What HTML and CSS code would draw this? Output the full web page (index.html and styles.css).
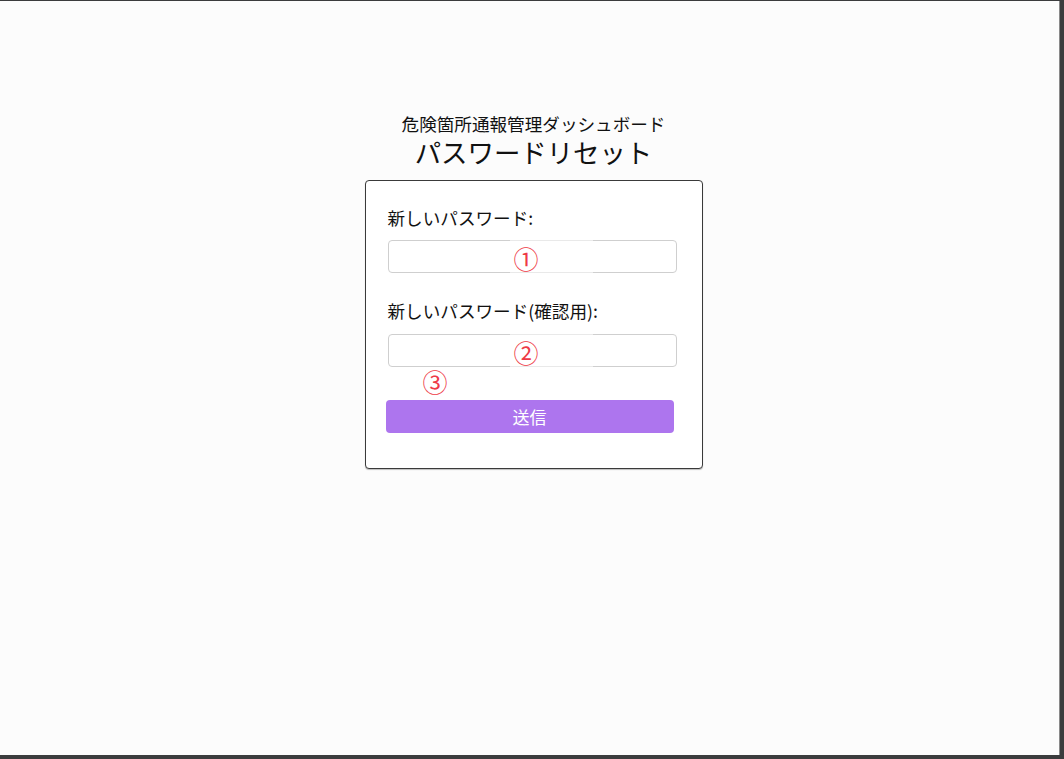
FILE: index.html
```html
<!DOCTYPE html>
<html lang="ja">
<head>
<meta charset="utf-8">
<title>パスワードリセット</title>
<link rel="stylesheet" href="styles.css">
</head>
<body>
<div class="screen">
  <main class="page">
    <div class="app-title">危険箇所通報管理ダッシュボード</div>
    <h1 class="heading">パスワードリセット</h1>
    <form class="card">
      <label class="label" for="pw1">新しいパスワード:</label>
      <div class="field">
        <input class="input" id="pw1" type="password">
        <span class="mark mark-box">①</span>
      </div>
      <label class="label label-2" for="pw2">新しいパスワード(確認用):</label>
      <div class="field">
        <input class="input" id="pw2" type="password">
        <span class="mark mark-box">②</span>
        <span class="mark mark-3">③</span>
      </div>
      <button class="submit" type="button">送信</button>
    </form>
  </main>
</div>
</body>
</html>
```

FILE: styles.css
```css
html {
  background: #3b3c3d;
}
body {
  margin: 0;
  font-family: "Noto Sans CJK JP", "Noto Sans", sans-serif;
  color: #111;
}
.screen {
  width: 1060px;
  height: 754px;
  margin-top: 1px;
  background: #fcfcfc;
  border-right: 1px solid #8a8a8a;
  box-sizing: border-box;
}
.page {
  display: flex;
  flex-direction: column;
  align-items: center;
  padding-top: 112px;
  padding-left: 8px;
}
.app-title,
.heading {
  font-family: "Liberation Sans", "Noto Sans CJK JP", sans-serif;
}
.app-title {
  font-size: 17.6px;
  line-height: 25px;
}
.heading {
  margin: 0;
  font-size: 26.4px;
  font-weight: 400;
  line-height: 32px;
}
.card {
  margin-top: 10px;
  width: 338px;
  box-sizing: border-box;
  border: 1px solid #3a3a3a;
  border-radius: 4px;
  background: #fff;
  box-shadow: 0 1px 1px rgba(0, 0, 0, 0.25);
  padding: 25px 25px 35px 22px;
  display: flex;
  flex-direction: column;
}
.label {
  font-size: 17.6px;
  line-height: 24px;
  margin-bottom: 10px;
}
.label-2 {
  margin-top: 26px;
  margin-bottom: 11px;
}
.field {
  position: relative;
}
.input {
  display: block;
  width: 289px;
  height: 33px;
  box-sizing: border-box;
  border: 1px solid #cfcfcf;
  border-radius: 4px;
  background: #fff;
  margin: 0;
}
.mark {
  position: absolute;
  color: #ee3a46;
  font-size: 25px;
  line-height: 26px;
}
.mark-box {
  top: 0;
  left: 122px;
  width: 83px;
  height: 33px;
  padding: 5px 0 0 4px;
  box-sizing: border-box;
  background: rgba(255, 255, 255, 0.55);
}
.mark-3 {
  top: 34px;
  left: 35px;
}
.submit {
  margin-top: 33px;
  margin-left: -2px;
  width: 288px;
  height: 33px;
  border: none;
  border-radius: 4px;
  background: #ad75ee;
  color: #fff;
  font-family: inherit;
  font-size: 17px;
  line-height: 33px;
  padding: 0;
}
```
